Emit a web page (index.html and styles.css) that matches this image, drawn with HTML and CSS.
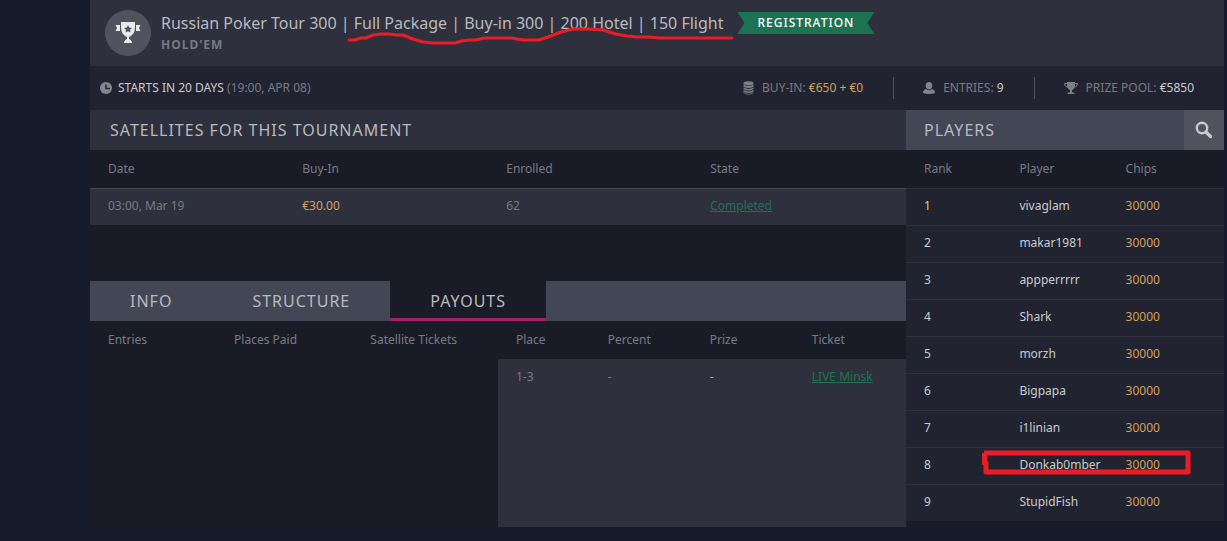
FILE: index.html
```html
<!DOCTYPE html>
<html lang="en">
<head>
<meta charset="utf-8">
<title>Russian Poker Tour 300</title>
<link rel="stylesheet" href="styles.css">
</head>
<body>
<main class="lobby">
  <header class="header">
    <div class="badge">
      <svg width="26" height="22" viewBox="0 0 26 22" aria-hidden="true">
        <path fill="#e9eaec" d="M6 0h14v5c0 5-2 8-6 10v2c2 1 3 2 3 4H9c0-2 1-3 3-4v-2C8 13 6 10 6 5zM.5 3H5v6H.5l1.5-3zM25.500 3H21v6h4.500L24 6z"/>
        <path fill="#51525d" d="M13 3l1.200 2.500 2.800.4-2 1.900.5 2.700-2.500-1.300-2.500 1.300.5-2.700-2-1.900 2.800-.4z"/>
      </svg>
    </div>
    <div class="heading">
      <h1 class="title">Russian Poker Tour 300 | Full Package | Buy-in 300 | 200 Hotel | 150 Flight</h1>
      <p class="game">HOLD'EM</p>
      <svg class="underline" width="390" height="20" viewBox="0 0 390 20" aria-hidden="true">
        <path d="M2 13H8L14 11H19L26 8L34 7H42L50 8H56L66 12L76 15L86 16H108L115 14L122 13H129L137 11H164L176 13H192L204 9L214 5L226 2H242L256 3L269 7L280 9L290 10H302L312 11H385"/>
      </svg>
    </div>
    <span class="ribbon">REGISTRATION</span>
  </header>

  <section class="meta">
    <p class="starts">
      <svg width="12" height="12" viewBox="0 0 12 12" aria-hidden="true"><circle cx="6" cy="6" r="6" fill="#85868d"/><path d="M6 2.500V6.500H10" fill="none" stroke="#212430" stroke-width="1.500"/></svg>
      <span><span class="bright">STARTS IN 20 DAYS</span> (19:00, APR 08)</span>
    </p>
    <ul class="stats">
      <li class="stat">
        <svg width="11" height="14" viewBox="0 0 11 14" aria-hidden="true"><g fill="#7d7e86"><ellipse cx="5.500" cy="2.300" rx="5" ry="2.100"/><path d="M.5 3.500q5 3.200 10 0v2q-5 3-10 0zM.5 6.300q5 3.200 10 0v1.700q-5 3-10 0zM.5 8.800q5 3.200 10 0v1.700q-5 3-10 0zM.5 11.300q5 3.200 10 0v.7q-5 3.500-10 0z"/></g></svg>
        <span>BUY-IN: <b class="gold">€650 + €0</b></span>
      </li>
      <li class="stat">
        <svg width="12" height="14" viewBox="0 0 12 14" aria-hidden="true"><path fill="#85868d" d="M6 1c2.200 0 3.300 1.500 3.300 3.500S7.800 8.500 6 8.500 2.700 6.500 2.700 4.500 3.800 1 6 1zM3 8q3 2.500 6 0c2 .6 3 2 3 4q-6 2-12 0c0-2 1-3.400 3-4z"/></svg>
        <span>ENTRIES: <b class="bright">9</b></span>
      </li>
      <li class="stat">
        <svg width="14" height="14" viewBox="0 0 14 14" aria-hidden="true"><path fill="#7d7e86" d="M3 1h8v3c0 3-1.500 4.500-3 5v2l2.500 1v1h-7v-1L6 11V9C4.500 8.500 3 7 3 4z"/><path fill="none" stroke="#7d7e86" d="M3.500 2.500h-3q0 3.500 4 4M10.500 2.500h3q0 3.500-4 4"/></svg>
        <span>PRIZE POOL: <b class="bright">€5850</b></span>
      </li>
    </ul>
  </section>

  <div class="columns">
    <div class="details">
      <section class="satellites">
        <h2 class="bar">SATELLITES FOR THIS TOURNAMENT</h2>
        <table class="table satellite-table">
          <colgroup><col class="col-date"><col class="col-quarter"><col class="col-quarter"><col></colgroup>
          <thead><tr><th>Date</th><th>Buy-In</th><th>Enrolled</th><th>State</th></tr></thead>
          <tbody><tr><td>03:00, Mar 19</td><td class="gold">€30.00</td><td>62</td><td><a href="#completed">Completed</a></td></tr></tbody>
        </table>
      </section>
      <nav class="tabs" aria-label="Tournament details">
        <button class="tab" type="button">INFO</button>
        <button class="tab" type="button">STRUCTURE</button>
        <button class="tab active" type="button">PAYOUTS</button>
      </nav>
      <section class="payouts">
        <table class="table">
          <colgroup><col class="col-entries"><col class="col-third"><col></colgroup>
          <thead><tr><th>Entries</th><th>Places Paid</th><th>Satellite Tickets</th></tr></thead>
        </table>
        <div class="places">
          <table class="table">
            <colgroup><col class="col-place"><col class="col-quarter"><col class="col-quarter"><col></colgroup>
            <thead><tr><th>Place</th><th>Percent</th><th>Prize</th><th>Ticket</th></tr></thead>
            <tbody><tr><td>1-3</td><td>-</td><td class="gold">-</td><td><a href="#ticket">LIVE Minsk</a></td></tr></tbody>
          </table>
        </div>
      </section>
    </div>

    <aside class="players">
      <div class="players-bar">
        <h2 class="bar">PLAYERS</h2>
        <button class="search" type="button" aria-label="Search players">
          <svg width="18" height="18" viewBox="0 0 18 18" aria-hidden="true"><circle cx="7" cy="7" r="5.200" fill="none" stroke="#c9cace" stroke-width="2.400"/><path d="M11 11l4.500 4.500" stroke="#c9cace" stroke-width="3.200" stroke-linecap="round"/></svg>
        </button>
      </div>
      <table class="table player-table">
        <colgroup><col class="col-rank"><col class="col-third"><col></colgroup>
        <thead><tr><th>Rank</th><th>Player</th><th>Chips</th></tr></thead>
        <tbody>
          <tr><td>1</td><td>vivaglam</td><td class="gold">30000</td></tr>
          <tr><td>2</td><td>makar1981</td><td class="gold">30000</td></tr>
          <tr><td>3</td><td>appperrrrr</td><td class="gold">30000</td></tr>
          <tr><td>4</td><td>Shark</td><td class="gold">30000</td></tr>
          <tr><td>5</td><td>morzh</td><td class="gold">30000</td></tr>
          <tr><td>6</td><td>Bigpapa</td><td class="gold">30000</td></tr>
          <tr><td>7</td><td>i1linian</td><td class="gold">30000</td></tr>
          <tr class="marked"><td>8</td><td>Donkab0mber</td><td class="gold">30000
            <svg class="marker" width="210" height="28" viewBox="0 0 210 28" aria-hidden="true"><path d="M2 4H206V23H4V14H2.500V4"/></svg></td></tr>
          <tr><td>9</td><td>StupidFish</td><td class="gold">30000</td></tr>
        </tbody>
      </table>
    </aside>
  </div>
</main>
</body>
</html>
```
FILE: styles.css
```css
* { box-sizing: border-box; }

body {
  margin: 0;
  padding: 0 3px 14px 90px;
  background: #161c2b;
  color: #797a83;
  font: 12px/18px "Noto Sans", sans-serif;
}

h1, h2, p, ul { margin: 0; padding: 0; font-weight: 400; }
svg { display: block; flex: none; }
button { border: 0; font: inherit; cursor: pointer; }
a { color: #1d7351; }
b { font-weight: 400; }

.lobby { background: #191c27; }
.bright { color: #c9cace; }
.gold { color: #d0a05c; }

.header {
  display: flex;
  align-items: flex-start;
  gap: 14px;
  height: 66px;
  padding: 0 15px;
  background: #2f303d;
}

.badge {
  display: flex;
  align-items: center;
  justify-content: center;
  flex: none;
  width: 46px;
  height: 46px;
  margin: 10px -4px 0 0;
  border-radius: 50%;
  background: #51525d;
}

.heading { position: relative; padding-top: 11px; }
.title { color: #b9babf; font-size: 16px; line-height: 24px; white-space: nowrap; }
.game { color: #797a83; font-weight: 700; line-height: 20px; letter-spacing: 1px; }

.underline {
  position: absolute;
  top: 27px;
  left: 186px;
  fill: none;
  stroke: #ed1c24;
  stroke-width: 3;
  stroke-linecap: round;
  stroke-linejoin: round;
}

.ribbon {
  margin-top: 12px;
  padding: 0 20px;
  background: #1d7351;
  color: #fff;
  line-height: 22px;
  letter-spacing: 1px;
  font-weight: 500;
  clip-path: polygon(0 0, 100% 0, calc(100% - 7px) 50%, 100% 100%, 0 100%, 7px 50%);
}

.meta {
  display: flex;
  align-items: center;
  justify-content: space-between;
  height: 44px;
  padding-left: 10px;
  background: #212430;
}

.starts { display: flex; align-items: center; gap: 6px; }
.stats { display: flex; list-style: none; }

.stat {
  display: flex;
  align-items: center;
  gap: 8px;
  height: 22px;
  padding: 0 30px 0 29px;
}

.stat + .stat { border-left: 1px solid #51525d; }

.columns { display: grid; grid-template-columns: 1fr 318px; }
.details { display: flex; flex-direction: column; }
.satellites { background: #191c27; padding-bottom: 56px; }

.bar {
  padding-left: 20px;
  background: #2f303d;
  color: #b9babf;
  font-size: 16px;
  line-height: 40px;
  letter-spacing: 1px;
}

.table { width: 100%; border-collapse: collapse; table-layout: fixed; }
.table th, .table td { padding: 0 0 0 18px; text-align: left; font-weight: 400; }
.table th { height: 38px; }
.table td { height: 37px; padding-bottom: 2px; }
.col-date { width: 23.8%; }
.col-quarter { width: 25%; }
.col-third { width: 33.4%; }
.col-entries { width: 30.9%; }
.col-place { width: 22.5%; }
.col-rank { width: 30%; }

.satellite-table td { border-top: 1px solid #434756; background: #2f303d; }

.tabs { display: flex; background: #424655; }

.tab {
  height: 40px;
  padding: 0 40px;
  background: transparent;
  color: #b9babf;
  font-size: 16px;
  letter-spacing: 1px;
}

.tab.active { background: #191c27; box-shadow: inset 0 -3px #a71f68; }

.payouts {
  display: grid;
  grid-template-columns: 1fr 1fr;
  align-items: start;
  flex: 1;
}

.places { height: 100%; min-height: 206px; background: #2f303d; }
.places th { background: #191c27; }

.players-bar { display: flex; }
.players .bar { flex: 1; padding-left: 18px; background: #424655; }

.search {
  display: flex;
  align-items: center;
  justify-content: center;
  width: 40px;
  padding: 0;
  background: #51525d;
}

.player-table td { border-top: 1px solid #2f303d; background: #212430; color: #c9cace; }
.player-table .gold { color: #d0a05c; }
.marked .gold { position: relative; }

.marker {
  position: absolute;
  top: 1px;
  right: 32px;
  fill: none;
  stroke: #ed1c24;
  stroke-width: 5;
  stroke-linejoin: round;
}
```
